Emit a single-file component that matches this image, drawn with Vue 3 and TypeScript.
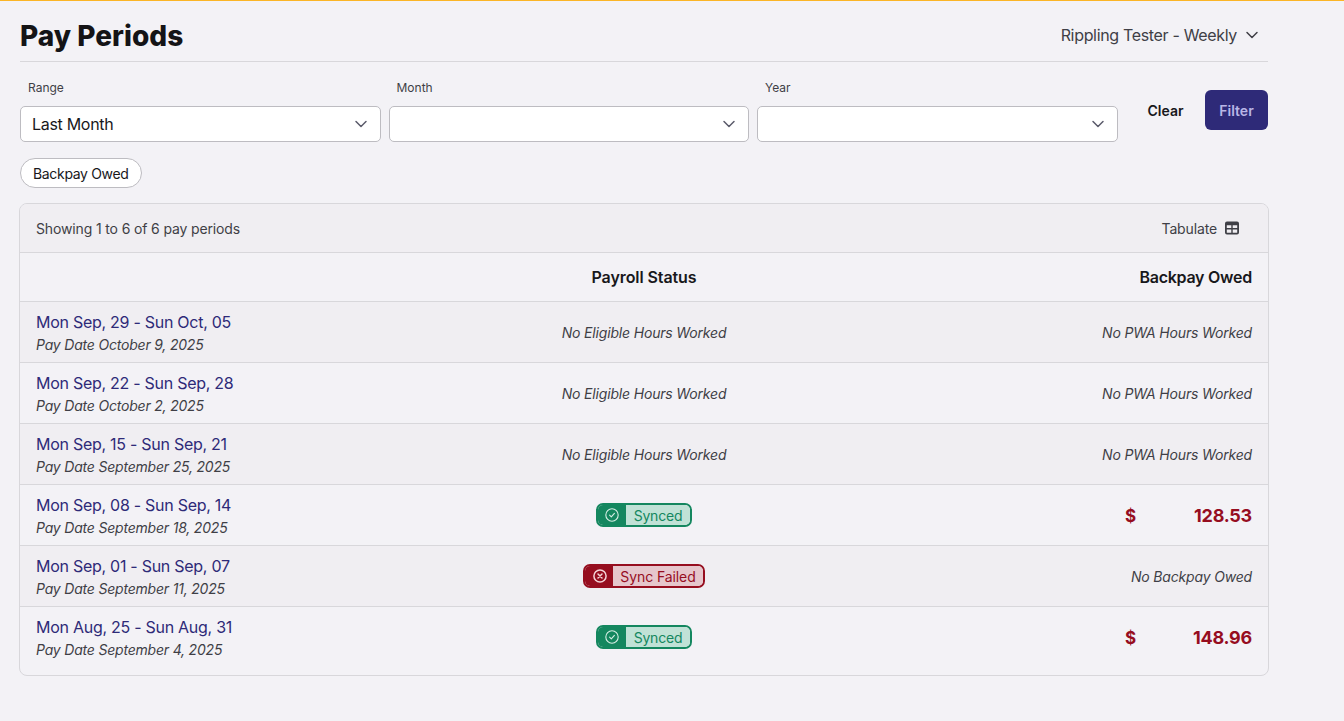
<script setup lang="ts">
interface Period {
  range: string;
  payDate: string;
  status: "none" | "synced" | "failed";
  backpay: string | null;
  note: string;
}

const periods: Period[] = [
  { range: "Mon Sep, 29 - Sun Oct, 05", payDate: "Pay Date October 9, 2025", status: "none", backpay: null, note: "No PWA Hours Worked" },
  { range: "Mon Sep, 22 - Sun Sep, 28", payDate: "Pay Date October 2, 2025", status: "none", backpay: null, note: "No PWA Hours Worked" },
  { range: "Mon Sep, 15 - Sun Sep, 21", payDate: "Pay Date September 25, 2025", status: "none", backpay: null, note: "No PWA Hours Worked" },
  { range: "Mon Sep, 08 - Sun Sep, 14", payDate: "Pay Date September 18, 2025", status: "synced", backpay: "128.53", note: "" },
  { range: "Mon Sep, 01 - Sun Sep, 07", payDate: "Pay Date September 11, 2025", status: "failed", backpay: null, note: "No Backpay Owed" },
  { range: "Mon Aug, 25 - Sun Aug, 31", payDate: "Pay Date September 4, 2025", status: "synced", backpay: "148.96", note: "" },
];

const filters = [
  { label: "Range", value: "Last Month" },
  { label: "Month", value: "" },
  { label: "Year", value: "" },
];
</script>

<template>
  <div class="page">
    <header class="top">
      <h1>Pay Periods</h1>
      <div class="company">
        <span>Rippling Tester - Weekly</span>
        <svg width="16" height="16" viewBox="0 0 16 16" fill="none" stroke="currentColor" stroke-width="1.5" stroke-linecap="round" stroke-linejoin="round"><path d="M3 5.5l5 5 5-5" /></svg>
      </div>
    </header>

    <div class="filters">
      <div v-for="f in filters" :key="f.label" class="field">
        <label>{{ f.label }}</label>
        <div class="select">
          <span>{{ f.value }}</span>
          <svg width="14" height="14" viewBox="0 0 14 14" fill="none" stroke="#5b5b6b" stroke-width="1.5" stroke-linecap="round" stroke-linejoin="round"><path d="M2 4.5l5 5 5-5" /></svg>
        </div>
      </div>
      <div class="actions">
        <button class="clear">Clear</button>
        <button class="filter">Filter</button>
      </div>
    </div>

    <div class="chips">
      <span class="chip">Backpay Owed</span>
    </div>

    <div class="table">
      <div class="summary">
        <span>Showing 1 to 6 of 6 pay periods</span>
        <span class="tabulate">
          Tabulate
          <svg width="14" height="14" viewBox="0 0 14 14"><path fill="#3f3f46" fill-rule="evenodd" d="M2 .5h10A2 2 0 0 1 14 2.500v9a2 2 0 0 1-2 2H2a2 2 0 0 1-2-2v-9a2 2 0 0 1 2-2zM1.800 4.300v2.700h4.500V4.300zm5.900 0v2.700h4.500V4.300zM1.800 8.400v3.300h4.500V8.400zm5.900 0v3.300h4.500V8.400z" /></svg>
        </span>
      </div>
      <div class="row head">
        <div></div>
        <div class="mid status-title">Payroll Status</div>
        <div class="end">Backpay Owed</div>
      </div>
      <div v-for="(p, i) in periods" :key="p.range" class="row" :class="{ striped: i % 2 === 0 }">
        <div>
          <div class="range">{{ p.range }}</div>
          <div class="paydate">{{ p.payDate }}</div>
        </div>
        <div class="mid">
          <span v-if="p.status === 'none'" class="note">No Eligible Hours Worked</span>
          <span v-else class="badge" :class="p.status">
            <span class="badge-icon">
              <svg v-if="p.status === 'synced'" width="14" height="14" viewBox="0 0 14 14" fill="none" stroke="currentColor" stroke-width="1.100" stroke-linecap="round" stroke-linejoin="round"><circle cx="7" cy="7" r="6.200" /><path d="M4.600 7.200l1.700 1.700 3.100-3.500" /></svg>
              <svg v-else width="14" height="14" viewBox="0 0 14 14" fill="none" stroke="currentColor" stroke-width="1.500" stroke-linecap="round"><circle cx="7" cy="7" r="6.100" /><path d="M5 5l4 4M9 5l-4 4" /></svg>
            </span>
            <span class="badge-text">{{ p.status === "synced" ? "Synced" : "Sync Failed" }}</span>
          </span>
        </div>
        <div class="end">
          <div v-if="p.backpay" class="money"><span class="dollar">$</span><span>{{ p.backpay }}</span></div>
          <span v-else class="note">{{ p.note }}</span>
        </div>
      </div>
    </div>
  </div>
</template>

<style>
html, body {
  margin: 0;
  background: #f3f2f6;
}
</style>

<style scoped>
.page {
  box-sizing: border-box;
  width: 1344px;
  height: 721px;
  padding: 0 76px 0 20px;
  border-top: 1px solid #fbb526;
  background: #f3f2f6;
  font-family: Inter, "Liberation Sans", sans-serif;
  color: #18181b;
  overflow: hidden;
}

.top {
  display: flex;
  justify-content: space-between;
  align-items: center;
  height: 61px;
  padding-top: 10px;
  box-sizing: border-box;
  border-bottom: 1px solid #d8d7db;
  margin-bottom: 17px;
}

h1 {
  margin: 0;
  font-size: 28px;
  line-height: 50px;
  font-weight: 800;
  letter-spacing: 0.03px;
  color: #141416;
}

.company {
  display: flex;
  align-items: center;
  gap: 7px;
  padding-right: 8px;
  margin-bottom: 3px;
  font-size: 16px;
  letter-spacing: -0.33px;
  color: #3f3f46;
}

.filters {
  display: flex;
  gap: 8px;
  align-items: flex-end;
}

.field {
  width: 360.500px;
}

.field label {
  display: block;
  height: 18px;
  margin: 0 0 9px 8px;
  font-size: 12px;
  line-height: 18px;
  color: #3f3f46;
}

.select {
  box-sizing: border-box;
  display: flex;
  justify-content: space-between;
  align-items: center;
  height: 36px;
  padding: 0 12px 0 11px;
  background: #fff;
  border: 1px solid #bdbcc1;
  border-radius: 5px;
  font-size: 16px;
  letter-spacing: -0.3px;
  color: #18181b;
}

.actions {
  display: flex;
  align-items: center;
  margin-left: auto;
  margin-bottom: 12px;
}

button {
  border: 0;
  font-family: inherit;
  font-size: 14px;
  font-weight: 600;
  height: 40px;
  border-radius: 6px;
  background: none;
}

.clear {
  width: 79px;
  color: #18181b;
}

.filter {
  width: 63px;
  background: #2e2a78;
  color: #b9b6e6;
}

.chips {
  margin-top: 16px;
  margin-bottom: 15px;
}

.chip {
  box-sizing: border-box;
  display: inline-flex;
  align-items: center;
  height: 30px;
  padding: 0 12px;
  background: #fff;
  border: 1px solid #bdbcc1;
  border-radius: 15px;
  font-size: 14px;
  letter-spacing: -0.33px;
}

.table {
  margin: 0 -1px;
  padding-bottom: 8px;
  border: 1px solid #d8d7db;
  border-radius: 8px;
  overflow: hidden;
}

.summary {
  display: flex;
  justify-content: space-between;
  align-items: center;
  height: 48px;
  padding: 0 29px 0 16px;
  background: #f0eef2;
  font-size: 14px;
  letter-spacing: -0.14px;
  color: #3f3f46;
}

.tabulate {
  display: flex;
  align-items: center;
  gap: 8px;
}

.row {
  display: grid;
  grid-template-columns: 1fr 1fr 1fr;
  align-items: center;
  height: 61px;
  box-sizing: border-box;
  padding: 0 16px;
  border-top: 1px solid #d8d7db;
}

.row.head {
  height: 49px;
  font-size: 16px;
  font-weight: 600;
  letter-spacing: -0.25px;
  color: #18181b;
}

.status-title {
  letter-spacing: -0.08px;
}

.row.striped {
  background: #f0eef2;
}

.mid {
  text-align: center;
}

.end {
  text-align: right;
}

.range {
  font-size: 16px;
  line-height: 24px;
  letter-spacing: -0.27px;
  color: #2e2a78;
}

.paydate {
  margin-top: 1px;
  font-size: 14px;
  line-height: 20px;
  font-style: italic;
  letter-spacing: -0.2px;
  color: #3f3f46;
}

.note {
  font-size: 14px;
  font-style: italic;
  letter-spacing: -0.17px;
  color: #3f3f46;
}

.badge {
  display: inline-flex;
  align-items: stretch;
  height: 24px;
  box-sizing: border-box;
  border: 2px solid;
  border-radius: 7px;
  font-size: 14px;
  letter-spacing: -0.2px;
  overflow: hidden;
  vertical-align: middle;
}

.badge-icon {
  display: flex;
  align-items: center;
  justify-content: center;
  width: 27px;
  padding-left: 1px;
  color: #d8efe6;
}

.badge-text {
  display: flex;
  align-items: center;
  padding: 0 7px;
}

.badge.synced {
  border-color: #14875f;
  color: #14875f;
}

.synced .badge-icon {
  background: #14875f;
}

.synced .badge-text {
  padding: 0 8px;
  background: #c0e2d6;
}

.badge.failed {
  border-color: #960d1f;
  color: #960d1f;
  letter-spacing: -0.1px;
}

.failed .badge-icon {
  background: #960d1f;
  color: #f5d5d9;
}

.failed .badge-text {
  background: #e6c6cc;
}

.money {
  display: flex;
  justify-content: space-between;
  align-items: center;
  height: 24px;
  padding-top: 1px;
  box-sizing: border-box;
  width: 127px;
  margin-left: auto;
  font-size: 18px;
  font-weight: 700;
  letter-spacing: -0.25px;
  color: #960d1f;
}

.dollar {
  font-size: 17px;
}
</style>
